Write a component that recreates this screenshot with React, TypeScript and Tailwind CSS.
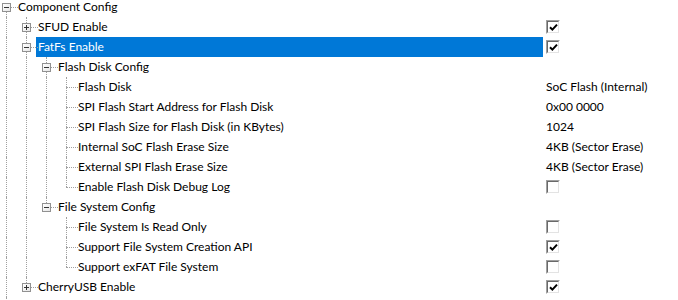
import React from "react";

type Val = string | { check: boolean } | undefined;
type Row = {
  label: string;
  level: number;
  box?: "minus" | "plus";
  anc: boolean[];
  last: boolean;
  first?: boolean;
  value?: Val;
  selected?: boolean;
};

const rows: Row[] = [
  { label: "Component Config", level: 0, box: "minus", anc: [], last: false, first: true },
  { label: "SFUD Enable", level: 1, box: "plus", anc: [true], last: false, value: { check: true } },
  { label: "FatFs Enable", level: 1, box: "minus", anc: [true], last: false, value: { check: true }, selected: true },
  { label: "Flash Disk Config", level: 2, box: "minus", anc: [true, true], last: false },
  { label: "Flash Disk", level: 3, anc: [true, true, true], last: false, value: "SoC Flash (Internal)" },
  { label: "SPI Flash Start Address for Flash Disk", level: 3, anc: [true, true, true], last: false, value: "0x00 0000" },
  { label: "SPI Flash Size for Flash Disk (in KBytes)", level: 3, anc: [true, true, true], last: false, value: "1024" },
  { label: "Internal SoC Flash Erase Size", level: 3, anc: [true, true, true], last: false, value: "4KB (Sector Erase)" },
  { label: "External SPI Flash Erase Size", level: 3, anc: [true, true, true], last: false, value: "4KB (Sector Erase)" },
  { label: "Enable Flash Disk Debug Log", level: 3, anc: [true, true, true], last: true, value: { check: false } },
  { label: "File System Config", level: 2, box: "minus", anc: [true, true], last: true },
  { label: "File System Is Read Only", level: 3, anc: [true, true, false], last: false, value: { check: false } },
  { label: "Support File System Creation API", level: 3, anc: [true, true, false], last: false, value: { check: true } },
  { label: "Support exFAT File System", level: 3, anc: [true, true, false], last: true, value: { check: false } },
  { label: "CherryUSB Enable", level: 1, box: "plus", anc: [true], last: true, value: { check: true } },
];

function AncestorCol({ line }: { line: boolean }) {
  return (
    <div className="w-[20px] h-full shrink-0">
      {line && <div className="ml-[10px] h-full border-l border-dotted border-[#a0a0a0]" />}
    </div>
  );
}

function Expander({ kind }: { kind: "minus" | "plus" }) {
  return (
    <div className="absolute left-[6px] top-[6px] w-[9px] h-[9px] border border-[#919191] bg-gradient-to-br from-white to-[#e6e6e6] flex items-center justify-center">
      <svg width="7" height="7" viewBox="0 0 7 7" shapeRendering="crispEdges">
        <rect x="1" y="3" width="5" height="1" fill="#333" />
        {kind === "plus" && <rect x="3" y="1" width="1" height="5" fill="#333" />}
      </svg>
    </div>
  );
}

function OwnCol({ row }: { row: Row }) {
  return (
    <div className="relative w-[20px] h-full shrink-0 flex flex-col">
      <div className="h-[10px] ml-[10px]">
        {!row.first && <div className="h-full border-l border-dotted border-[#a0a0a0]" />}
      </div>
      <div
        className={`h-[10px] ml-[10px] w-[12px] border-t border-dotted border-[#a0a0a0] ${
          row.last ? "" : "border-l"
        }`}
      />
      {row.box && <Expander kind={row.box} />}
    </div>
  );
}

function CheckBox({ checked }: { checked: boolean }) {
  return (
    <div className="w-[14px] h-[14px] border border-t-[#a0a0a0] border-l-[#a0a0a0] border-b-white border-r-white">
      <div className="w-full h-full border border-t-[#696969] border-l-[#696969] border-b-[#e3e3e3] border-r-[#e3e3e3] bg-white flex items-center justify-center">
        {checked && (
          <svg width="9" height="9" viewBox="0 0 9 9">
            <path d="M1 4.2 L3.4 6.6 L8 1.6" fill="none" stroke="#000" strokeWidth="2" />
          </svg>
        )}
      </div>
    </div>
  );
}

function TreeRow({ row }: { row: Row }) {
  const v = row.value;
  return (
    <div className="flex h-[20px]">
      <div className="w-[547px] shrink-0 flex h-full">
        {row.anc.map((a, i) => (
          <AncestorCol key={i} line={a} />
        ))}
        <OwnCol row={row} />
        <div
          className={`flex-1 h-full flex items-center pl-[2px] whitespace-nowrap ${
            row.selected ? "bg-[#0078d7] text-white" : "text-black"
          }`}
        >
          {row.label}
        </div>
      </div>
      <div className="flex-1 pl-[3px] flex items-center whitespace-nowrap text-black">
        {typeof v === "string" ? v : v ? <CheckBox checked={v.check} /> : null}
      </div>
    </div>
  );
}

export default function App() {
  return (
    <div className="w-[678px] h-[300px] overflow-hidden bg-white font-['Lato',sans-serif] text-[12px] leading-none">
      <div className="-mt-[3px] -ml-[4px]">
        {rows.map((r, i) => (
          <TreeRow key={i} row={r} />
        ))}
        <div className="flex h-[20px]">
          <AncestorCol line={true} />
        </div>
      </div>
    </div>
  );
}
